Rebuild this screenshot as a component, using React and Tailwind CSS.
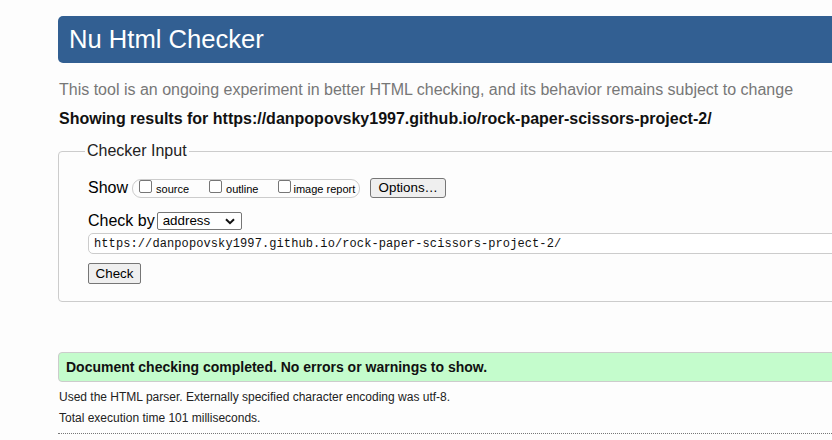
import React from 'react';

function Checkbox() {
  return <span className="block w-[13px] h-[13px] shrink-0 bg-white border border-[#767676] rounded-[2px]" />;
}

function Chevron() {
  return (
    <svg width="10" height="7" viewBox="0 0 10 7" className="shrink-0">
      <path d="M1 1.2l4 4 4-4" fill="none" stroke="#111" strokeWidth="2" />
    </svg>
  );
}

export default function App() {
  const url = 'https://danpopovsky1997.github.io/rock-paper-scissors-project-2/';

  return (
    <div className="w-[832px] h-[440px] overflow-hidden bg-[#fdfdfd] text-black font-['Liberation_Sans',Arial,sans-serif]">
      <div className="ml-[58px] w-[800px] pt-4">
        {/* header bar */}
        <h1 className="h-[47px] flex items-center pl-[11px] bg-[#325f92] rounded-l-[5px] text-white text-[25.6px] leading-none">
          Nu Html Checker
        </h1>

        <p className="mt-[18px] pl-px text-[16px] leading-[18px] text-[#777]">
          This tool is an ongoing experiment in better HTML checking, and its behavior remains subject to change
        </p>
        <p className="mt-[11px] pl-px text-[16px] leading-[18px] font-bold text-[#111]">
          Showing results for {url}
        </p>

        {/* checker input */}
        <fieldset className="mt-[14px] border border-[#cccccc] rounded-[4px]">
          <legend className="ml-[26px] px-[2px] text-[16px] leading-[18px] text-[#222]">Checker Input</legend>
          <div className="pl-[29px] pt-[18px] pb-[17px]">
            <div className="flex items-center h-[20px]">
              <span className="text-[16px] leading-[18px]">Show</span>
              <div className="ml-[4px] h-[19px] flex items-start pl-[6px] pr-[4px] border border-[#cccccc] rounded-[9px] text-[11px] leading-[13px]">
                <Checkbox />
                <span className="ml-[4px] mt-[3px]">source</span>
                <span className="ml-[20px]"><Checkbox /></span>
                <span className="ml-[4px] mt-[3px]">outline</span>
                <span className="ml-[20px]"><Checkbox /></span>
                <span className="ml-[2px] mt-[3px]">image report</span>
              </div>
              <button className="ml-[10px] w-[76px] h-[20px] bg-[#efefef] border border-[#767676] rounded-[3px] text-[13.33px] leading-none">
                Options…
              </button>
            </div>

            <div className="mt-[13px] flex items-center h-[20px]">
              <span className="text-[16px] leading-[18px]">Check by</span>
              <div className="ml-[2px] w-[85px] h-[18px] flex items-center justify-between pl-[5px] pr-[6px] bg-white border border-[#767676] rounded-[2px] text-[13.33px] leading-none">
                <span>address</span>
                <Chevron />
              </div>
            </div>

            <div className="mt-[2px] h-[21px] flex items-center pl-[5px] bg-white border border-[#cccccc] rounded-[5px] font-['Liberation_Mono',monospace] text-[12px] tracking-[0.1px] text-[#111]">
              {url}
            </div>

            <button className="mt-[9px] block w-[53px] h-[21px] bg-[#efefef] border border-[#767676] rounded-[2px] text-[13.33px] leading-none">
              Check
            </button>
          </div>
        </fieldset>

        {/* result */}
        <div className="mt-[50px] h-[30px] flex items-center pl-[7px] bg-[#c4fccc] border border-[#cccccc] rounded-l-[4px] text-[14px] font-bold text-[#111]">
          Document checking completed. No errors or warnings to show.
        </div>
        <p className="mt-[8px] pl-px text-[12px] leading-[15px] text-[#222]">
          Used the HTML parser. Externally specified character encoding was utf-8.
        </p>
        <p className="mt-[6px] pl-px text-[12px] leading-[15px] text-[#222]">
          Total execution time 101 milliseconds.
        </p>
        <div className="mt-[7px] border-t border-dotted border-[#777]" />
      </div>
    </div>
  );
}
